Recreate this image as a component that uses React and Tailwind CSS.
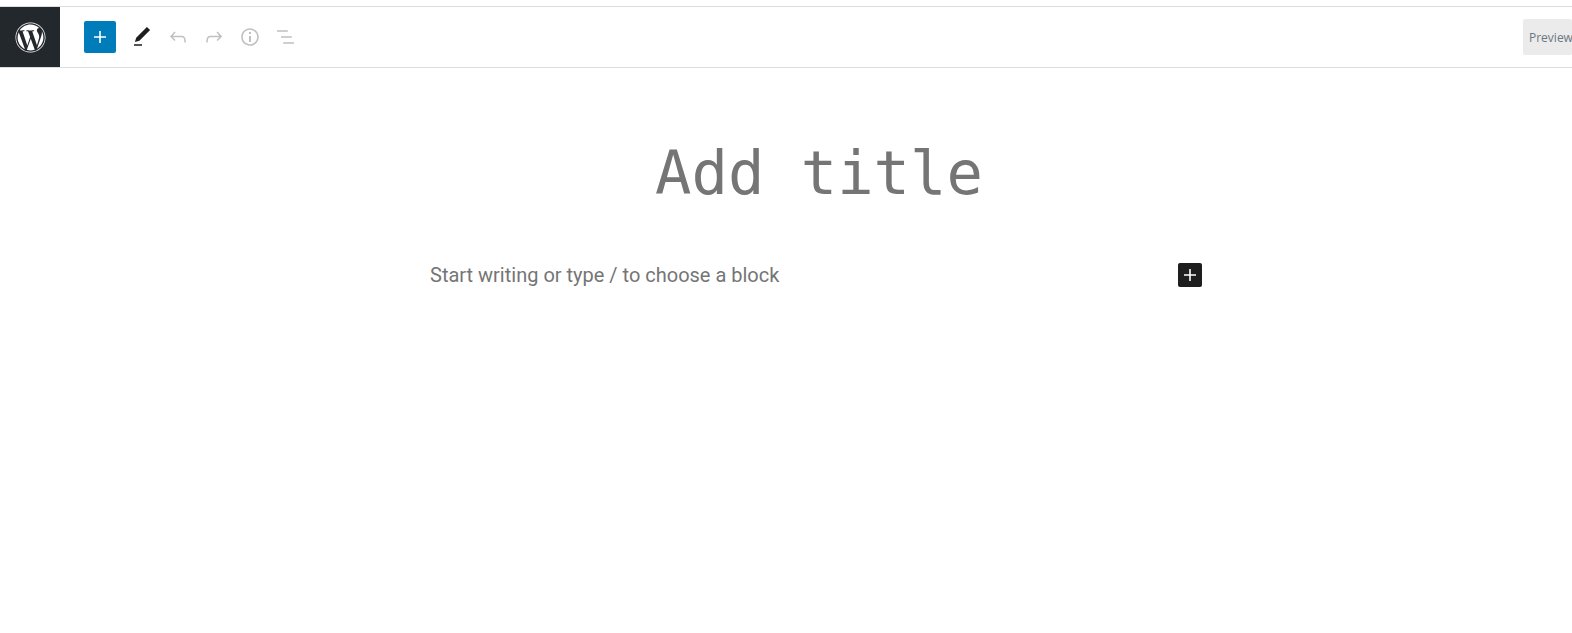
import React from 'react';
import { FaWordpress } from 'react-icons/fa';

const Icon = ({ d, className }) => (
  <svg viewBox="0 0 24 24" width="24" height="24" fill="currentColor" className={className}>
    <path d={d} />
  </svg>
);

const icons = {
  plus: 'M18 11.2h-5.2V6h-1.6v5.2H6v1.6h5.2V18h1.6v-5.2H18z',
  pencil: 'M20.1 5.1L16.9 2 6.2 12.7l-1.3 4.4 4.5-1.3L20.1 5.1zM4 20.8h8v-1.5H4v1.5z',
  undo: 'M18.3 11.7c-.6-.6-1.4-.9-2.3-.9H6.7l2.9-3.3-1.1-1-4.5 5L8.5 16l1-1-2.7-2.7H16c.5 0 .9.2 1.3.5 1 1 1 3.4 1 4.5v.3h1.5v-.2c0-1.5 0-4.3-1.5-5.7z',
  redo: 'M15.6 6.5l-1.1 1 2.9 3.3H8c-.9 0-1.7.3-2.3.9-1.4 1.5-1.4 4.2-1.4 5.6v.2h1.5v-.3c0-1.1 0-3.5 1-4.5.3-.3.7-.5 1.3-.5h9.2L14.5 15l1.1 1.1 4.6-4.6-4.6-5z',
  info: 'M12 3.2c-4.8 0-8.8 3.9-8.8 8.8 0 4.8 3.9 8.8 8.8 8.8 4.8 0 8.8-3.9 8.8-8.8 0-4.8-4-8.8-8.8-8.8zm0 16c-4 0-7.2-3.3-7.2-7.2C4.8 8 8 4.8 12 4.8s7.2 3.3 7.2 7.2c0 4-3.2 7.2-7.2 7.2zM11 17h2v-6h-2v6zm0-8h2V7h-2v2z',
  list: 'M3 5.2h10.8v1.5H3zM7 11.2h10.8v1.5H7zM9.2 17.2H20v1.5H9.2z',
};

export default function App() {
  return (
    <div className="w-[1572px] h-[633px] overflow-hidden bg-white pt-[6px]">
      <header className="flex h-[62px] items-stretch border-y border-[#dddddd] bg-white">
        <div className="flex w-[60px] items-center justify-center bg-[#23282d] text-white">
          <FaWordpress size={31} />
        </div>
        <div className="ml-6 flex items-center">
          <button className="flex h-8 w-8 items-center justify-center rounded-[2px] bg-[#007cba] text-white">
            <Icon d={icons.plus} />
          </button>
          <div className="ml-[14px] flex items-center gap-3 text-[#c0c0c0]">
            <Icon d={icons.pencil} className="text-[#1e1e1e]" />
            <Icon d={icons.undo} />
            <Icon d={icons.redo} />
            <Icon d={icons.info} />
            <Icon d={icons.list} />
          </div>
        </div>
        <div className="ml-auto flex items-center">
          <button className="flex h-9 w-[49px] items-center overflow-hidden rounded-[2px] bg-[#ebebeb] pt-[2px] pl-[6px] font-['Open_Sans',sans-serif] text-[12px] text-[#6c7781]">
            Preview
          </button>
        </div>
      </header>
      <main className="w-[1202px] pl-[430px]">
        <h1 className="mt-[66px] pl-[6px] text-center font-['DejaVu_Sans_Mono',monospace] text-[60.5px] leading-[78px] font-normal text-[#757575]">
          Add title
        </h1>
        <div className="mt-[51px] flex items-center justify-between">
          <p className="font-['Roboto',sans-serif] text-[20px] leading-6 text-[#757575]">
            Start writing or type / to choose a block
          </p>
          <button className="flex h-6 w-6 items-center justify-center rounded-[2px] bg-[#1e1e1e] text-white">
            <Icon d={icons.plus} />
          </button>
        </div>
      </main>
    </div>
  );
}
